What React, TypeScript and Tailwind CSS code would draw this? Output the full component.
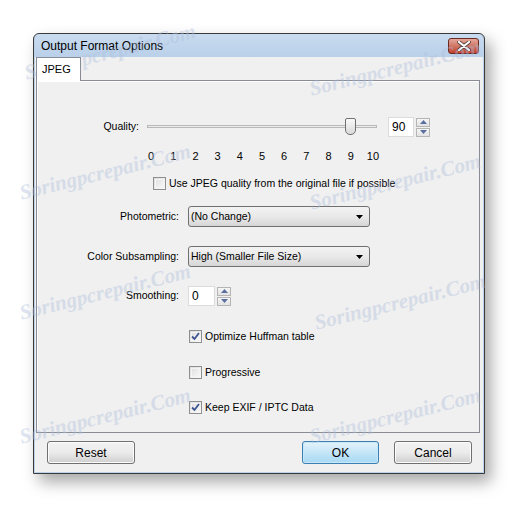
import React from "react";

const font = { fontFamily: '"Liberation Sans", Arial, sans-serif' };

function Check({ checked }: { checked?: boolean }) {
  return (
    <span className="relative flex h-[13px] w-[13px] shrink-0 items-center justify-center border border-[#8e8f8f] bg-gradient-to-br from-[#dcdcdc] to-[#fbfbfb]">
      <span className="absolute inset-[1px] border border-[#f4f4f4]" />
      {checked && (
        <svg width="9" height="9" viewBox="0 0 9 9" className="relative">
          <path d="M1 4.5 L3.5 7 L8 1" fill="none" stroke="#3d5493" strokeWidth="1.8" />
        </svg>
      )}
    </span>
  );
}

function Spin({ h = 20 }: { h?: number }) {
  const half = h / 2 - 1;
  return (
    <div className="flex flex-col gap-[1px]">
      {["up", "down"].map((d) => (
        <div
          key={d}
          className="flex w-[14px] items-center justify-center border border-[#b5b5b5] bg-gradient-to-b from-[#f6f6f6] to-[#e2e2e2]"
          style={{ height: half }}
        >
          <svg width="7" height="4" viewBox="0 0 7 4">
            {d === "up" ? (
              <path d="M0 4 L3.5 0 L7 4 Z" fill="#5a6f9e" />
            ) : (
              <path d="M0 0 L3.5 4 L7 0 Z" fill="#5a6f9e" />
            )}
          </svg>
        </div>
      ))}
    </div>
  );
}

function Combo({ value }: { value: string }) {
  return (
    <div className="flex h-[21px] w-[182px] items-center justify-between rounded-[3px] border border-[#707070] bg-gradient-to-b from-[#f3f3f3] via-[#e9e9e9] to-[#d6d6d6] pl-[2px] pr-[6px]">
      <span>{value}</span>
      <svg width="7" height="4" viewBox="0 0 7 4">
        <path d="M0 0 L7 0 L3.5 4 Z" fill="#000" />
      </svg>
    </div>
  );
}

function Btn({ label, primary, w }: { label: string; primary?: boolean; w: string }) {
  return (
    <button
      className={
        "h-[23px] rounded-[3px] border text-[12px] text-black " +
        w +
        " " +
        (primary
          ? "border-[#3c7fb1] bg-gradient-to-b from-[#e5f4fc] via-[#c4e5f6] to-[#a7d9f5] shadow-[inset_0_0_0_1px_#c7e7fa]"
          : "border-[#707070] bg-gradient-to-b from-[#f2f2f2] via-[#ebebeb] to-[#cfcfcf] shadow-[inset_0_0_0_1px_#fcfcfc]")
      }
    >
      {label}
    </button>
  );
}

const marks = [
  [25, 58], [310, 74], [20, 178], [310, 188], [20, 298], [315, 308], [20, 422], [310, 422],
];

export default function App() {
  const ticks = ["0", "1", "2", "3", "4", "5", "6", "7", "8", "9", "10"];
  return (
    <div className="relative h-[507px] w-[516px] overflow-hidden bg-white pl-[33px] pt-[33px] text-[10.5px] text-black" style={font}>
      <div className="flex h-[441px] w-[452px] flex-col rounded-t-[6px] border border-[#3a3a3a] bg-[#bcd2ea] px-[1px] pb-[1px] shadow-[6px_8px_16px_rgba(0,0,0,0.35)]">
        {/* title bar */}
        <div className="flex h-[23px] shrink-0 items-center justify-between rounded-t-[5px] bg-gradient-to-b from-[#c9dbef] to-[#b9d0e9] pl-[6px] pr-[4px]">
          <span className="text-[12px] text-black">Output Format Options</span>
          <div className="mt-[4px] flex h-[16px] w-[31px] items-center justify-center self-start rounded-[3px] border border-[#6b2a20] bg-gradient-to-b from-[#e3a89b] via-[#d07564] to-[#c1402e]">
            <svg width="14" height="10" viewBox="0 0 14 10">
              <path d="M2 1 L12 9 M12 1 L2 9" stroke="#4a3a3a" strokeWidth="3.6" strokeLinecap="round" />
              <path d="M2 1 L12 9 M12 1 L2 9" stroke="#ffffff" strokeWidth="2.2" strokeLinecap="round" />
            </svg>
          </div>
        </div>

        {/* client */}
        <div className="flex flex-1 flex-col bg-[#f0f0f0] pl-[1px] pr-[3px]">
          {/* tab */}
          <div className="relative z-10 -mb-[1px] flex h-[24px] w-[45px] items-center border border-b-0 border-[#898c95] bg-white pl-[5px] text-[11px]">
            JPEG
          </div>
          {/* panel */}
          <div className="h-[353px] border border-[#898c95]">
            <div className="flex h-full flex-col border-t border-l border-white">
              {/* quality */}
              <div className="mt-[35px] flex h-[20px] items-center">
                <span className="w-[101px] text-right">Quality:</span>
                <div className="relative ml-[8px] h-[20px] w-[230px]">
                  <div className="absolute left-0 right-0 top-[8px] h-[3px] border border-[#b8b8b8] bg-[#eceeee]" />
                  <div className="absolute left-[198px] top-[1px] h-[17px] w-[11px] rounded-b-[5px] rounded-t-[2px] border border-[#707070] bg-gradient-to-b from-[#fafafa] to-[#d9d9d9]" />
                </div>
                <div className="ml-[11px] flex h-[20px] w-[26px] items-center border border-[#dcdcdc] bg-white pl-[3px] text-[12px]">
                  90
                </div>
                <div className="ml-[2px]">
                  <Spin />
                </div>
              </div>
              {/* ticks */}
              <div className="ml-[102px] mt-[11px] grid h-[14px] w-[244px] grid-cols-11 text-center text-[11px]">
                {ticks.map((t) => (
                  <span key={t}>{t}</span>
                ))}
              </div>
              {/* use jpeg quality */}
              <div className="ml-[115px] mt-[15px] flex h-[13px] items-center gap-[3px]">
                <Check />
                <span>Use JPEG quality from the original file if possible</span>
              </div>
              {/* photometric */}
              <div className="mt-[16px] flex items-center">
                <span className="w-[141px] text-right">Photometric:</span>
                <div className="ml-[9px]">
                  <Combo value="(No Change)" />
                </div>
              </div>
              <div className="mt-[19px] flex items-center">
                <span className="w-[141px] text-right">Color Subsampling:</span>
                <div className="ml-[9px]">
                  <Combo value="High (Smaller File Size)" />
                </div>
              </div>
              <div className="mt-[19px] flex items-center">
                <span className="w-[141px] text-right">Smoothing:</span>
                <div className="ml-[9px] flex h-[20px] w-[27px] items-center border border-[#dcdcdc] bg-white pl-[3px] text-[12px]">
                  0
                </div>
                <div className="ml-[2px]">
                  <Spin />
                </div>
              </div>
              <div className="ml-[151px] mt-[24px] flex h-[13px] items-center gap-[3px]">
                <Check checked />
                <span>Optimize Huffman table</span>
              </div>
              <div className="ml-[151px] mt-[23px] flex h-[13px] items-center gap-[3px]">
                <Check />
                <span>Progressive</span>
              </div>
              <div className="ml-[151px] mt-[22px] flex h-[13px] items-center gap-[3px]">
                <Check checked />
                <span>Keep EXIF / IPTC Data</span>
              </div>
            </div>
          </div>
          {/* buttons */}
          <div className="mt-[8px] flex items-center pl-[11px] pr-[8px]">
            <Btn label="Reset" w="w-[88px]" />
            <div className="flex-1" />
            <Btn label="OK" primary w="w-[77px]" />
            <div className="ml-[15px]">
              <Btn label="Cancel" w="w-[78px]" />
            </div>
          </div>
        </div>
      </div>

      {/* watermark overlay */}
      {marks.map(([x, y], i) => (
        <span
          key={i}
          className="pointer-events-none absolute origin-left -rotate-[14deg] whitespace-nowrap text-[21px] font-bold italic text-[#aebfdc] opacity-40"
          style={{ left: x, top: y, fontFamily: '"Liberation Serif", serif' }}
        >
          Soringpcrepair.Com
        </span>
      ))}
    </div>
  );
}
